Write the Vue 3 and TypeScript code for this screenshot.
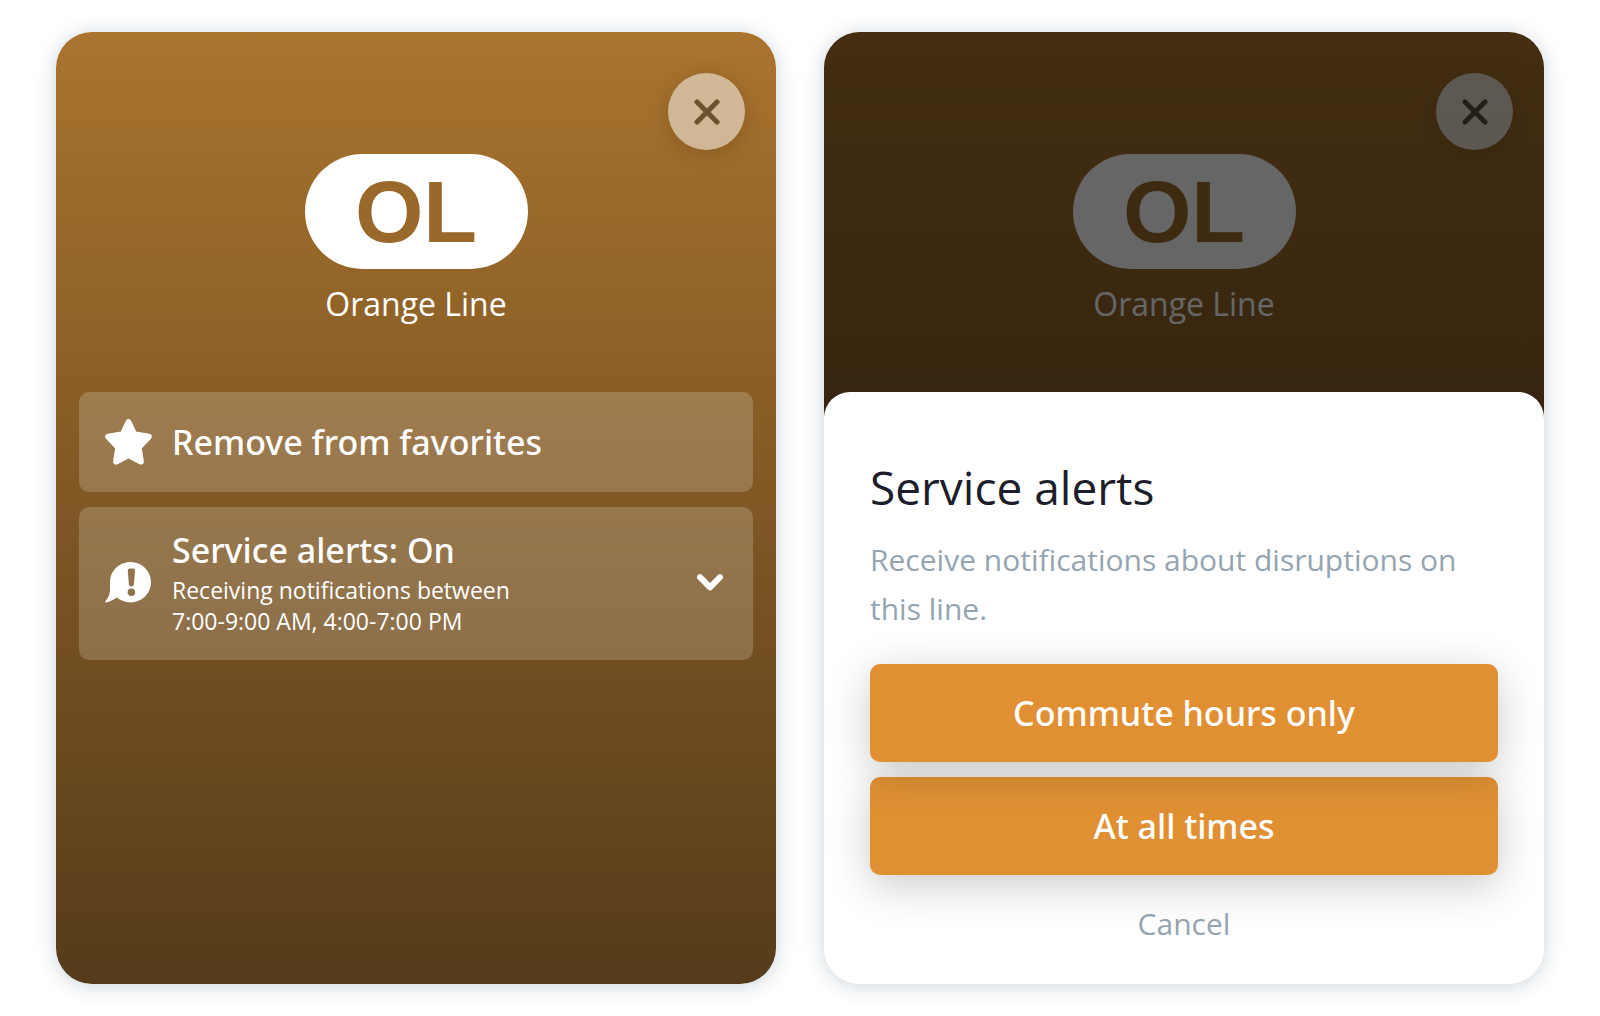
<script setup lang="ts">
interface LineInfo {
  code: string
  name: string
}

interface AlertChoice {
  id: string
  label: string
}

const line: LineInfo = { code: 'OL', name: 'Orange Line' }

const choices: AlertChoice[] = [
  { id: 'commute', label: 'Commute hours only' },
  { id: 'always', label: 'At all times' },
]
</script>

<template>
  <main class="page">
    <section class="card" aria-label="Line settings">
      <header class="header">
        <button class="close" type="button" aria-label="Close">
          <svg class="close-icon" viewBox="0 0 26 26" aria-hidden="true">
            <path d="M3 3 23 23M23 3 3 23" />
          </svg>
        </button>
        <div class="badge">{{ line.code }}</div>
        <h1 class="line-name">{{ line.name }}</h1>
      </header>

      <div class="options">
        <button class="option" type="button">
          <svg class="option-icon" viewBox="0 0 47 46" aria-hidden="true">
            <path
              class="star"
              d="M23.5 3.2 29.2 15.2 43.8 17.6 33.6 28.4 35.9 42.6 23.5 36 11.1 42.6 13.4 28.4 3.2 17.6 17.8 15.2Z"
            />
          </svg>
          <span class="option-title">Remove from favorites</span>
        </button>

        <button class="option option-tall" type="button">
          <svg class="option-icon" viewBox="0 0 47 40" aria-hidden="true">
            <path
              class="bubble"
              d="M25.7 0A20.3 20.2 0 1 1 25.7 40.4C20.4 40.4 15.6 38.8 11.8 35.6C8.5 38 4.6 39.8 1 40.4C0.2 40.4 0 39.6 0.6 39C3.6 35.6 5.2 31.5 5 27V20.2C5 9 14 0 25.7 0ZM24.6 6.5C23.4 6.5 22.7 7.4 22.8 8.6L23.8 21.8C23.9 23.6 24.9 24.6 26.4 24.6S28.9 23.6 29 21.8L30 8.6C30.1 7.4 29.4 6.5 28.2 6.5ZM26.4 26.5A3.8 3.8 0 1 0 26.4 34.1 3.8 3.8 0 1 0 26.4 26.5Z"
            />
          </svg>
          <span class="option-text">
            <span class="option-title">Service alerts: On</span>
            <span class="option-detail">Receiving notifications between<br />7:00-9:00 AM, 4:00-7:00 PM</span>
          </span>
          <svg class="chevron" viewBox="0 0 26 17" aria-hidden="true">
            <path d="M3 3.2 13 13.4 23 3.2" />
          </svg>
        </button>
      </div>
    </section>

    <section class="card card-dimmed" aria-label="Service alert settings">
      <header class="header">
        <button class="close close-solid" type="button" aria-label="Close">
          <svg class="close-icon" viewBox="0 0 26 26" aria-hidden="true">
            <path d="M3 3 23 23M23 3 3 23" />
          </svg>
        </button>
        <div class="badge">{{ line.code }}</div>
        <p class="line-name">{{ line.name }}</p>
      </header>
      <div class="scrim"></div>

      <div class="sheet" role="dialog" aria-labelledby="sheet-title">
        <h2 id="sheet-title" class="sheet-title">Service alerts</h2>
        <p class="sheet-text">Receive notifications about disruptions on this line.</p>
        <div class="choices">
          <button v-for="choice in choices" :key="choice.id" class="choice" type="button">
            {{ choice.label }}
          </button>
        </div>
        <button class="cancel" type="button">Cancel</button>
      </div>
    </section>
  </main>
</template>

<style>
body {
  margin: 0;
  background: #fff;
}
</style>

<style scoped>
.page {
  box-sizing: border-box;
  display: flex;
  gap: 48px;
  min-height: 100vh;
  padding: 32px 56px;
  font-family: 'Open Sans', 'Noto Sans', sans-serif;
}

button {
  margin: 0;
  border: 0;
  font: inherit;
  cursor: pointer;
}

.card {
  position: relative;
  display: flex;
  flex: 1;
  flex-direction: column;
  min-width: 0;
  overflow: hidden;
  border-radius: 36px;
  background: linear-gradient(#a9742e, #553b1a);
  box-shadow: 0 2px 20px rgba(40, 75, 100, 0.24);
  color: #fff;
}

.card-dimmed {
  background: #fff linear-gradient(#a9742e, #775222) no-repeat top / 100% 60%;
}

.header {
  display: flex;
  flex-direction: column;
  align-items: center;
  padding: 41px 31px 64px;
}

.close {
  display: flex;
  align-items: center;
  justify-content: center;
  align-self: flex-end;
  width: 77px;
  height: 77px;
  padding: 0;
  border-radius: 50%;
  background: rgba(255, 255, 255, 0.5);
  box-shadow: 0 4px 20px rgba(60, 35, 0, 0.22);
  color: #6d502c;
}

.close-solid {
  background: rgba(255, 255, 255, 0.75);
  color: #5a4d40;
}

.close-icon {
  width: 26px;
  height: 26px;
  fill: none;
  stroke: currentColor;
  stroke-width: 5;
  stroke-linecap: round;
}

.badge {
  display: flex;
  align-items: center;
  justify-content: center;
  width: 223px;
  height: 115px;
  margin-top: 4px;
  border-radius: 58px;
  background: #fff;
  color: #98692a;
  font-family: 'Liberation Sans', sans-serif;
  font-size: 88px;
  font-weight: 700;
  line-height: 115px;
}

.line-name {
  margin: 11px 0 0;
  font-size: 32px;
  font-weight: 400;
  line-height: 48px;
}

.options {
  display: flex;
  flex-direction: column;
  gap: 15px;
  padding: 0 23px 24px;
}

.option {
  display: flex;
  align-items: center;
  gap: 20px;
  min-height: 100px;
  padding: 0 30px 0 26px;
  border-radius: 10px;
  background: rgba(255, 255, 255, 0.19);
  color: #fff;
  text-align: left;
}

.option-tall {
  padding-top: 20px;
  padding-bottom: 23px;
}

.option-icon {
  flex: none;
  width: 47px;
  overflow: visible;
}

.star {
  fill: currentColor;
  stroke: currentColor;
  stroke-width: 6;
  stroke-linejoin: round;
}

.bubble {
  fill: currentColor;
  fill-rule: evenodd;
}

.option-text {
  display: flex;
  flex: 1;
  flex-direction: column;
  gap: 2px;
}

.option-title,
.choice {
  font-family: 'Noto Sans', sans-serif;
  font-size: 34px;
  font-weight: 500;
  line-height: 46px;
}

.option-detail {
  font-size: 23px;
  font-weight: 400;
  line-height: 31px;
}

.chevron {
  flex: none;
  width: 26px;
  fill: none;
  stroke: currentColor;
  stroke-width: 6;
  stroke-linecap: round;
  stroke-linejoin: round;
}

.scrim {
  position: absolute;
  inset: 0 0 40%;
  background: rgba(0, 0, 0, 0.6);
}

.sheet {
  position: relative;
  display: flex;
  flex: 1;
  flex-direction: column;
  padding: 67px 46px 34px;
  border-radius: 26px 26px 0 0;
  background: #fff;
  color: #1c1e2b;
}

.sheet-title {
  margin: 0;
  font-size: 46px;
  font-weight: 400;
  line-height: 56px;
}

.sheet-text {
  margin: 20px 0 31px;
  color: #94a5b1;
  font-size: 30px;
  font-weight: 400;
  line-height: 49px;
}

.choices {
  display: flex;
  flex-direction: column;
  gap: 15px;
}

.choice {
  height: 98px;
  border-radius: 10px;
  background: #e09033;
  box-shadow: 0 10px 44px rgba(0, 0, 0, 0.21);
  color: #fff;
}

.choice:first-child {
  position: relative;
  z-index: 1;
}

.cancel {
  align-self: center;
  margin-top: 25px;
  padding: 0 24px;
  background: none;
  color: #94a5b1;
  font-size: 30px;
  font-weight: 400;
  line-height: 48px;
}
</style>
